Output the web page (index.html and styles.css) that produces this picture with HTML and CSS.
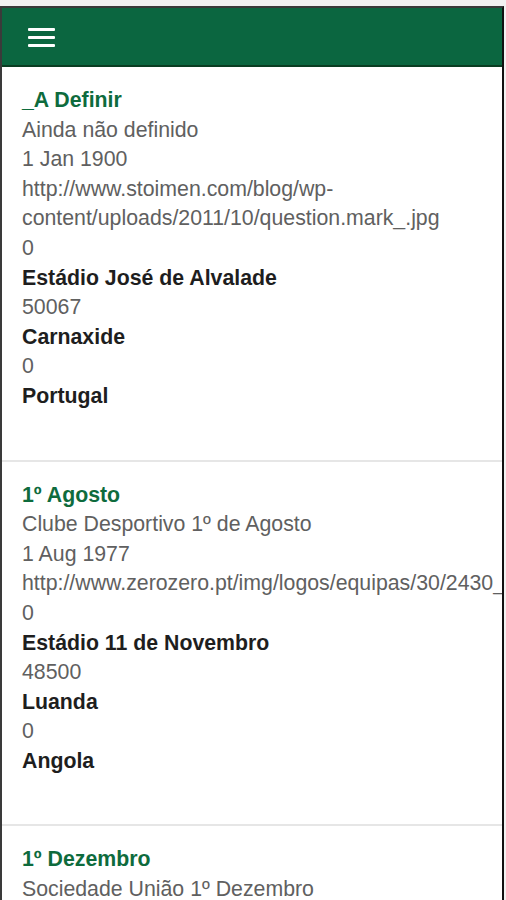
FILE: index.html
```html
<!DOCTYPE html>
<html lang="pt">
<head>
  <meta charset="UTF-8" />
  <meta name="viewport" content="width=device-width, initial-scale=1" />
  <title>Equipas</title>
  <link rel="stylesheet" href="styles.css">
</head>
<body>
  <div class="ecra">
    <header class="barra">
      <button class="menu" aria-label="Menu">
        <span></span><span></span><span></span>
      </button>
    </header>

    <ul class="lista-equipas">
      <li class="equipa">
        <div class="nome">_A Definir</div>
        <div class="info">Ainda não definido</div>
        <div class="info">1 Jan 1900</div>
        <div class="info">http://www.stoimen.com/blog/wp-content/uploads/2011/10/question.mark_.jpg</div>
        <div class="info">0</div>
        <div class="destaque">Estádio José de Alvalade</div>
        <div class="info">50067</div>
        <div class="destaque">Carnaxide</div>
        <div class="info">0</div>
        <div class="destaque">Portugal</div>
      </li>
      <li class="equipa">
        <div class="nome">1º Agosto</div>
        <div class="info">Clube Desportivo 1º de Agosto</div>
        <div class="info">1 Aug 1977</div>
        <div class="info">http://www.zerozero.pt/img/logos/equipas/30/2430_</div>
        <div class="info">0</div>
        <div class="destaque">Estádio 11 de Novembro</div>
        <div class="info">48500</div>
        <div class="destaque">Luanda</div>
        <div class="info">0</div>
        <div class="destaque">Angola</div>
      </li>
      <li class="equipa">
        <div class="nome">1º Dezembro</div>
        <div class="info">Sociedade União 1º Dezembro</div>
        <div class="info">1 Dec 1880</div>
        <div class="info">0</div>
        <div class="destaque">Campo Conde Sucena</div>
        <div class="info">2500</div>
        <div class="destaque">Sintra</div>
        <div class="info">0</div>
        <div class="destaque">Portugal</div>
      </li>
    </ul>
  </div>
</body>
</html>
```

FILE: styles.css
```css
body {
  margin: 0;
  background: #f2f2f2;
  font-family: 'Liberation Sans', Arial, sans-serif;
}

.ecra {
  margin-top: 6px;
  width: 504px;
  box-sizing: border-box;
  height: 900px;
  overflow: hidden;
  background: #ffffff;
  border: 2px solid #3a3a3a;
  border-right-color: #111;
  border-bottom: none;
}

.barra {
  height: 57px;
  background: #0b6640;
  border-bottom: 2px solid #0a3d22;
  display: flex;
  align-items: center;
  padding-left: 26px;
}

.menu {
  display: flex;
  flex-direction: column;
  gap: 5px;
  width: 27px;
  padding: 0;
  margin-top: 2px;
  background: none;
  border: none;
  cursor: pointer;
}

.menu span {
  display: block;
  height: 3px;
  background: #ffffff;
  border-radius: 1px;
}

.lista-equipas {
  list-style: none;
  margin: 0;
  padding: 0;
}

.equipa {
  padding: 19px 20px 48px 20px;
  border-bottom: 2px solid #e6e6e6;
  font-size: 21.3px;
  line-height: 29.6px;
}

.nome {
  color: #0e6b3d;
  font-weight: bold;
}

.info {
  color: #606060;
}

.destaque {
  color: #1e1e1e;
  font-weight: bold;
}
```
